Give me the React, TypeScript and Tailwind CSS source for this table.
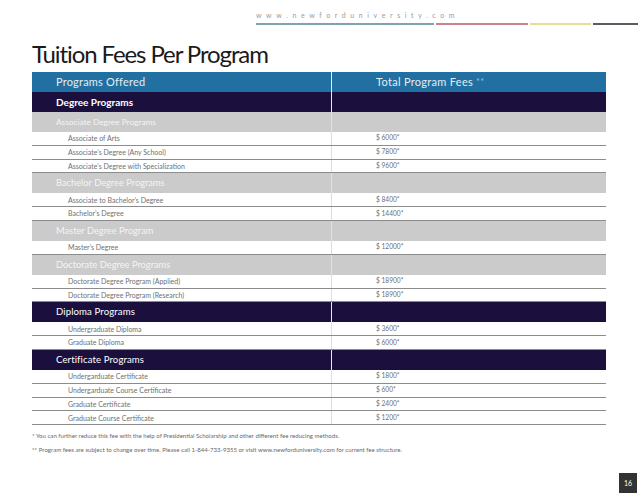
import React from "react";

type Row =
  | { kind: "group"; label: string }
  | { kind: "sub"; label: string }
  | { kind: "item"; label: string; fee: string };

const rows: Row[] = [
  { kind: "group", label: "Degree Programs" },
  { kind: "sub", label: "Associate Degree Programs" },
  { kind: "item", label: "Associate of Arts", fee: "$ 6000*" },
  { kind: "item", label: "Associate’s Degree (Any School)", fee: "$ 7800*" },
  { kind: "item", label: "Associate’s Degree with Specialization", fee: "$ 9600*" },
  { kind: "sub", label: "Bachelor Degree Programs" },
  { kind: "item", label: "Associate to Bachelor’s Degree", fee: "$ 8400*" },
  { kind: "item", label: "Bachelor’s Degree", fee: "$ 14400*" },
  { kind: "sub", label: "Master Degree Program" },
  { kind: "item", label: "Master’s Degree", fee: "$ 12000*" },
  { kind: "sub", label: "Doctorate Degree Programs" },
  { kind: "item", label: "Doctorate Degree Program (Applied)", fee: "$ 18900*" },
  { kind: "item", label: "Doctorate Degree Program (Research)", fee: "$ 18900*" },
  { kind: "group", label: "Diploma Programs" },
  { kind: "item", label: "Undergraduate Diploma", fee: "$ 3600*" },
  { kind: "item", label: "Graduate Diploma", fee: "$ 6000*" },
  { kind: "group", label: "Certificate Programs" },
  { kind: "item", label: "Undergarduate Certificate", fee: "$ 1800*" },
  { kind: "item", label: "Undergarduate Course Certificate", fee: "$ 600*" },
  { kind: "item", label: "Graduate Certificate", fee: "$ 2400*" },
  { kind: "item", label: "Graduate Course Certificate", fee: "$ 1200*" },
];

function TableRow({ row }: { row: Row }) {
  if (row.kind === "group") {
    const bold = row.label === "Degree Programs";
    return (
      <div className="flex h-[20px] bg-[#1b0f3e] text-white">
        <div className={`w-[300px] border-r border-[#e8e8ee] pl-[24px] flex items-center ${bold ? "font-bold text-[10px]" : "text-[9.6px] tracking-[0.1px]"}`}>
          {row.label}
        </div>
        <div className="flex-1" />
      </div>
    );
  }
  if (row.kind === "sub") {
    const small = row.label.startsWith("Associate");
    return (
      <div className="flex h-[20px] bg-[#cbcbcb] text-[#f4f4f4]">
        <div className={`w-[300px] border-r border-[#e2e2e2] pl-[24px] flex items-center ${small ? "text-[8.3px]" : "text-[9.3px]"}`}>{row.label}</div>
        <div className="flex-1" />
      </div>
    );
  }
  return (
    <div className="flex h-[13.8px] border-b border-[#8c8c8c] text-[#707070] text-[7px]">
      <div className="w-[300px] border-r border-[#dddddd] pl-[36px] flex items-center">{row.label}</div>
      <div className="flex-1 pl-[44px] flex items-center text-[6.6px]">{row.fee}</div>
    </div>
  );
}

export default function App() {
  return (
    <div className="w-[638px] h-[493px] bg-white flex flex-col font-['Lato',sans-serif] overflow-hidden">
      <div className="pt-[10px] pl-[256px]">
        <div className="text-[7px] tracking-[4.6px] text-[#9a9a9a] leading-[10px]">www.newforduniversity.com</div>
        <div className="flex mt-[3px] h-[2px] gap-[2px]">
          <div className="w-[178px] bg-[#7ea3b3]" />
          <div className="w-[92px] bg-[#c98585]" />
          <div className="w-[61px] bg-[#e8de97]" />
          <div className="flex-1 bg-[#5b5b63]" />
        </div>
      </div>

      <h1 className="ml-[32px] mt-[11px] text-[24px] leading-[36px] tracking-[-1.1px] text-[#1a1a1a]">
        Tuition Fees Per Program
      </h1>

      <div className="ml-[32px] w-[574px]">
        <div className="flex h-[20px] bg-[#2170a1] text-[#e3edf4] text-[11px]">
          <div className="w-[300px] border-r border-[#e8eef3] pl-[24px] flex items-center tracking-[0.2px]">Programs Offered</div>
          <div className="flex-1 pl-[44px] flex items-center tracking-[0.3px]">
            Total Program Fees <span className="ml-[3px] text-[9px] text-[#9fc0d8]">**</span>
          </div>
        </div>
        {rows.map((r, i) => (
          <TableRow key={i} row={r} />
        ))}
      </div>

      <div className="ml-[32px] mt-[7px] text-[6.1px] text-[#6a6a6a] leading-[7px]">
        <p>* You can further reduce this fee with the help of Presidential Scholarship and other different fee reducing methods.</p>
        <p className="mt-[7px]">** Program fees are subject to change over time. Please call 1-844-733-9355 or visit www.newforduniversity.com for current fee structure.</p>
      </div>

      <div className="mt-auto flex justify-end pr-[1px]">
        <div className="w-[18px] h-[20px] bg-[#333333] text-white text-[7px] flex items-center justify-center">16</div>
      </div>
    </div>
  );
}
